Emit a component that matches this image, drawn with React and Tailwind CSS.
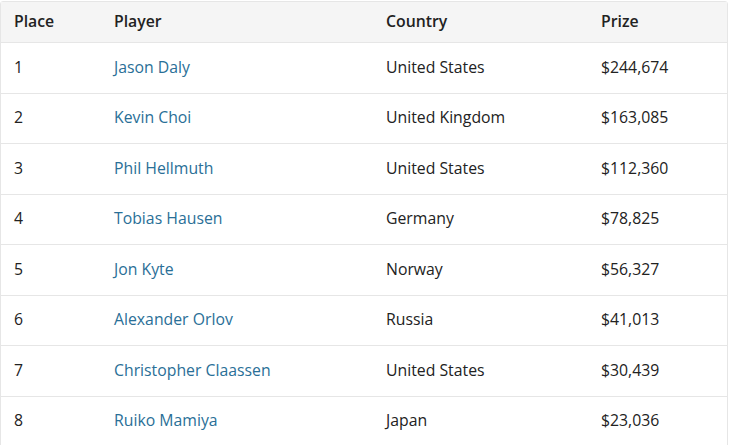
import React from 'react';

const results = [
  { place: 1, player: 'Jason Daly', country: 'United States', prize: '$244,674' },
  { place: 2, player: 'Kevin Choi', country: 'United Kingdom', prize: '$163,085' },
  { place: 3, player: 'Phil Hellmuth', country: 'United States', prize: '$112,360' },
  { place: 4, player: 'Tobias Hausen', country: 'Germany', prize: '$78,825' },
  { place: 5, player: 'Jon Kyte', country: 'Norway', prize: '$56,327' },
  { place: 6, player: 'Alexander Orlov', country: 'Russia', prize: '$41,013' },
  { place: 7, player: 'Christopher Claassen', country: 'United States', prize: '$30,439' },
  { place: 8, player: 'Ruiko Mamiya', country: 'Japan', prize: '$23,036' },
];

const cols = 'grid grid-cols-[113px_272px_215px_1fr] items-center';

export default function App() {
  return (
    <div className="bg-white pt-[1px] text-[#222] text-[15.8px]" style={{ fontFamily: '"Open Sans", sans-serif' }}>
      <div className="w-[728px] border border-[#e6e6e6] rounded-t-[3px]">
        <div className={`${cols} h-[40px] bg-[#f5f5f5] font-semibold`}>
          <div className="pl-[13px]">Place</div>
          <div>Player</div>
          <div>Country</div>
          <div>Prize</div>
        </div>
        {results.map((r) => (
          <div key={r.place} className={`${cols} h-[50.5px] border-t border-[#e6e6e6]`}>
            <div className="pl-[13px]">{r.place}</div>
            <div className="text-[#2a6f97]">{r.player}</div>
            <div>{r.country}</div>
            <div>{r.prize}</div>
          </div>
        ))}
      </div>
    </div>
  );
}
